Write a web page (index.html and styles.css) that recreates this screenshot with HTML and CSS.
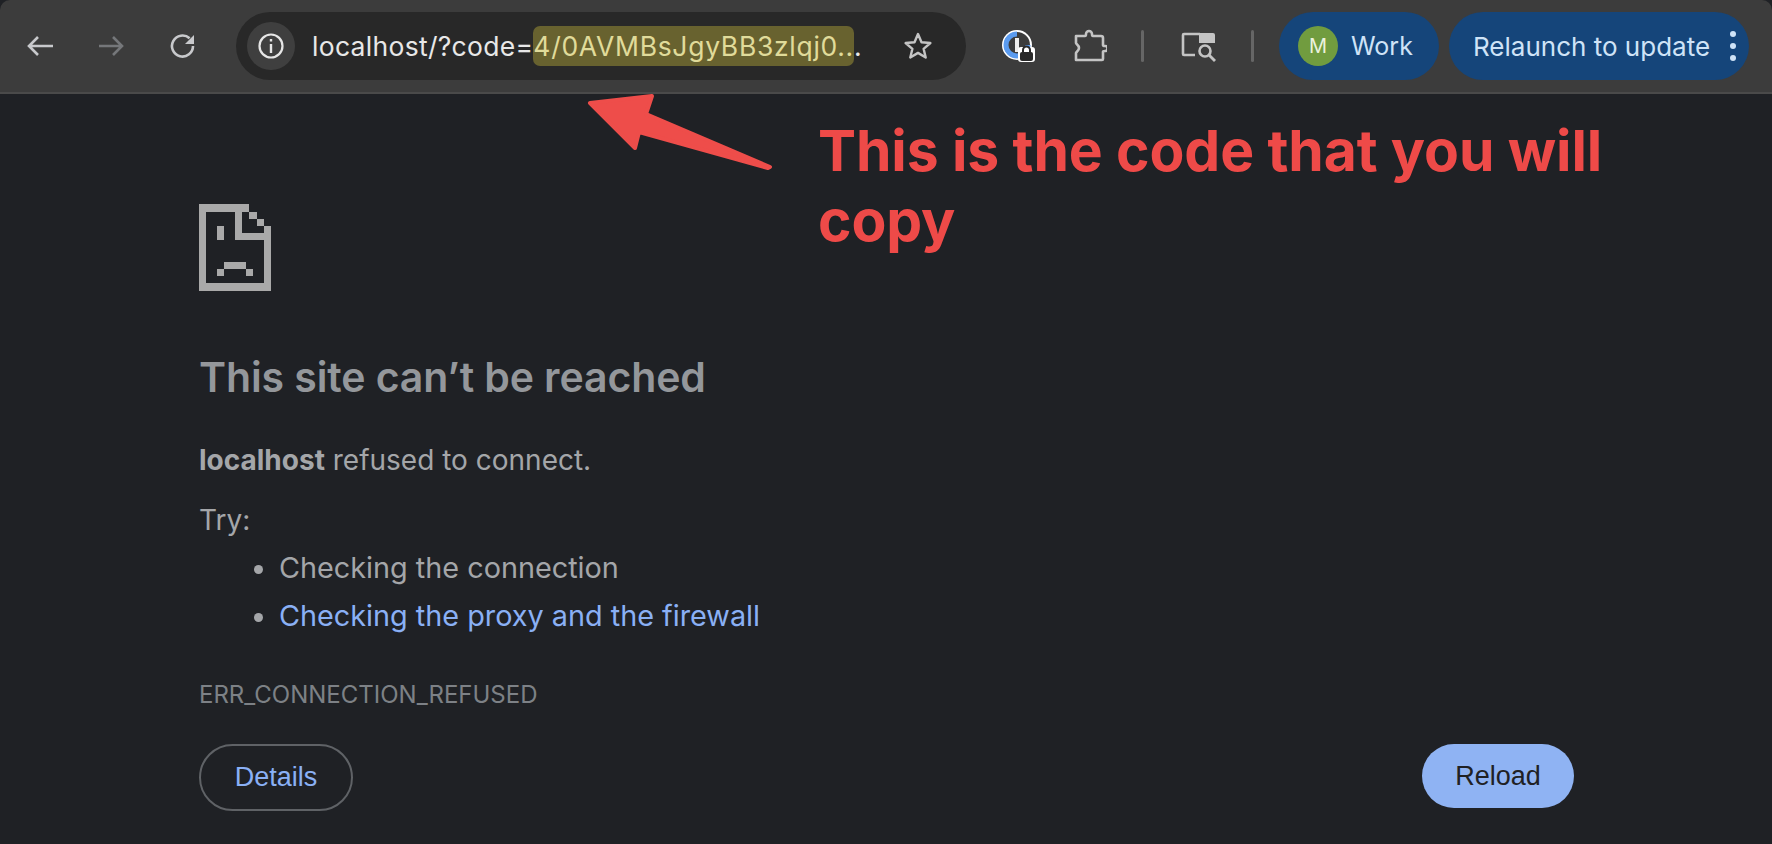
FILE: index.html
```html
<!DOCTYPE html>
<html lang="en">
<head>
  <meta charset="UTF-8" />
  <title>localhost</title>
  <link rel="stylesheet" href="styles.css">
</head>
<body>
  <div class="toolbar">
    <svg class="tool-icon" width="28" height="28" viewBox="0 0 28 28"><path d="M28 14H5M13 5l-9 9 9 9" fill="none" stroke="#c8c9cc" stroke-width="2.6"/></svg>
    <svg class="tool-icon" width="28" height="28" viewBox="0 0 28 28"><path d="M3 14h23M17 5l9 9-9 9" fill="none" stroke="#75777a" stroke-width="2.6"/></svg>
    <svg class="tool-icon" width="28" height="28" viewBox="0 0 28 28"><path d="M26 14a10.500 10.500 0 1 1-3.400-7.700" fill="none" stroke="#c8c9cc" stroke-width="2.6"/><path d="M27 3v9h-9z" fill="#c8c9cc"/></svg>
    <div class="omnibox">
      <span class="site-info"><svg width="30" height="30" viewBox="0 0 30 30"><circle cx="15" cy="15" r="11.5" fill="none" stroke="#e6e6e6" stroke-width="2.2"/><path d="M15 13v9M15 8v2.600" stroke="#e6e6e6" stroke-width="2.4"/></svg></span>
      <span class="url">localhost/?code=<span class="url-mark">4/0AVMBsJgyBB3zlqj0..</span>.</span>
      <svg class="star" width="32" height="32" viewBox="0 0 32 32"><path d="M16 4l3.500 8.200 8.900.8-6.800 5.800 2.100 8.700-7.700-4.600-7.700 4.600 2.100-8.700-6.800-5.800 8.900-.8z" fill="none" stroke="#c4c4c4" stroke-width="2.4" stroke-linejoin="round"/></svg>
    </div>
    <span class="ext-pass"><svg width="34" height="34" viewBox="0 0 34 34"><circle cx="16" cy="16" r="15" fill="#fff"/><circle cx="16" cy="16" r="13" fill="#3c3c3c"/><path d="M16 5a11 11 0 1 0 11 11" fill="none" stroke="#5a9bf0" stroke-width="5"/><rect x="14" y="9" width="4" height="14" fill="#eee"/><rect x="17" y="18" width="17" height="15" rx="3" fill="#fff"/><rect x="19" y="23" width="13" height="9" rx="2" fill="#2a2a2a"/><path d="M22 23v-2a3.500 3.500 0 0 1 7 0v2" fill="none" stroke="#2a2a2a" stroke-width="2"/></svg></span>
    <svg class="ext-puzzle" width="34" height="34" viewBox="0 0 34 34"><path d="M3 7h9c1 0 1-1 1-2a3 3 0 0 1 6 0c0 1 0 2 1 2h8a2 2 0 0 1 2 2v7c0 1 1 1 2 1a2.500 2.500 0 0 1 0 5c-1 0-2 0-2 1v7a1 1 0 0 1-1 1H3v-7c0-1 3-2 3-5s-3-4-3-5z" fill="none" stroke="#c4c4c4" stroke-width="2.6" stroke-linejoin="round"/></svg>
    <span class="divider"></span>
    <svg class="ext-lens" width="36" height="32" viewBox="0 0 36 32"><path d="M14 25H3a1 1 0 0 1-1-1V5a1 1 0 0 1 1-1h16" fill="none" stroke="#c4c4c4" stroke-width="2.6"/><path d="M18 3h14a2 2 0 0 1 2 2v8H18z" fill="#c4c4c4"/><circle cx="24" cy="21" r="5.500" fill="none" stroke="#c4c4c4" stroke-width="2.6"/><path d="M28 25l6 6" stroke="#c4c4c4" stroke-width="2.8"/></svg>
    <span class="divider second"></span>
    <div class="pill profile"><span class="avatar">M</span><span>Work</span></div>
    <div class="pill relaunch"><span>Relaunch to update</span><span class="dots"><i></i><i></i><i></i></span></div>
  </div>
  <div class="page">
    <svg class="sad-tab" width="72" height="87" viewBox="0 0 10 12" shape-rendering="crispEdges"><path fill="#a9a9a9" d="M0 0h7v1H0zM0 1h1v11H0zM1 11h9v1H1zM9 3h1v8H9zM7 1h1v1H7zM8 2h1v1H8zM5 1h1v4H5zM6 4h3v1H6zM2.500 3h1v2h-1zM3.500 8h3v1h-3zM2.500 9h1v1h-1zM6.500 9h1v1h-1z"/></svg>
    <h1 class="title">This site can’t be reached</h1>
    <p class="summary"><b>localhost</b> refused to connect.</p>
    <p class="try">Try:</p>
    <ul class="suggestions">
      <li>Checking the connection</li>
      <li><a class="link">Checking the proxy and the firewall</a></li>
    </ul>
    <p class="error-code">ERR_CONNECTION_REFUSED</p>
    <div class="buttons">
      <button class="btn-details">Details</button>
      <button class="btn-reload">Reload</button>
    </div>
  </div>
  <svg class="arrow" width="200" height="90" viewBox="0 0 200 90"><path d="M3 13L65 6 59 24 183 77 181 78 52 42 48 58z" fill="#ee4d4a" stroke="#ee4d4a" stroke-width="4" stroke-linejoin="round"/></svg>
  <div class="note">This is the code that you will copy</div>
</body>
</html>
```

FILE: styles.css
```css
* {
  box-sizing: border-box;
}

body {
  margin: 0;
  height: 844px;
  overflow: hidden;
  background-color: #1f2125;
  font-family: Inter, "Liberation Sans", sans-serif;
  position: relative;
}

.toolbar {
  height: 94px;
  background-color: #3c3c3c;
  border-bottom: 2px solid #4a4a4a;
  border-radius: 10px 10px 0 0;
  display: flex;
  align-items: center;
  padding-left: 25px;
}

.tool-icon {
  margin-right: 43px;
}

.omnibox {
  width: 730px;
  height: 68px;
  margin-left: -2px;
  padding: 0 32px 0 11px;
  border-radius: 34px;
  background-color: #282828;
  display: flex;
  align-items: center;
}

.site-info {
  width: 48px;
  height: 48px;
  border-radius: 50%;
  background-color: #3f3f3f;
  display: flex;
  align-items: center;
  justify-content: center;
  margin-right: 17px;
}

.url {
  flex: 1;
  font-size: 26.5px;
  letter-spacing: 0.3px;
  color: #e8e8e8;
  white-space: nowrap;
}

.url-mark {
  background-color: #68622f;
  color: #e0db9a;
  letter-spacing: 0.7px;
  border-radius: 7px;
  padding: 4px 0;
}

.ext-pass {
  margin-left: 35px;
  height: 34px;
}

.ext-puzzle {
  margin-left: 38px;
}

.divider {
  width: 3px;
  height: 32px;
  border-radius: 2px;
  background-color: #666;
  margin-left: 34px;
  margin-right: 37px;
}

.divider.second {
  margin-left: 34px;
  margin-right: 25px;
}

.pill {
  height: 68px;
  border-radius: 34px;
  background-color: #15457a;
  color: #cfe3f7;
  font-size: 25px;
  display: flex;
  align-items: center;
}

.profile {
  width: 160px;
  padding-left: 19px;
  gap: 13px;
}

.avatar {
  width: 40px;
  height: 40px;
  border-radius: 50%;
  background-color: #719c3f;
  color: #eaf2dc;
  font-size: 20px;
  display: flex;
  align-items: center;
  justify-content: center;
}

.relaunch {
  width: 300px;
  margin-left: 10px;
  padding-left: 24px;
  font-size: 26px;
}

.dots {
  margin-left: 20px;
  display: flex;
  flex-direction: column;
  gap: 6px;
}

.dots i {
  width: 6px;
  height: 6px;
  border-radius: 50%;
  background-color: #cfe3f7;
}

.page {
  width: 1376px;
  margin-left: 199px;
  padding-top: 110px;
  color: #a4a6a9;
}

.sad-tab {
  display: block;
}

.title {
  margin: 60px 0 0;
  font-size: 41px;
  font-weight: 600;
  letter-spacing: -0.1px;
  line-height: 52px;
  color: #94979b;
}

.summary {
  margin: 39px 0 0;
  font-size: 28px;
  line-height: 36px;
}

.try {
  margin: 24px 0 0;
  font-size: 28px;
  line-height: 36px;
}

.suggestions {
  margin: 6px 0 0;
  padding-left: 80px;
  font-size: 28.8px;
  line-height: 48px;
}

.link {
  color: #8ab0f5;
}

.error-code {
  margin: 40px 0 0;
  font-size: 24px;
  line-height: 30px;
  color: #7d8186;
}

.buttons {
  margin-top: 34px;
  display: flex;
  justify-content: space-between;
  align-items: flex-start;
}

.btn-details,
.btn-reload {
  border-radius: 34px;
  font-family: "Liberation Sans", sans-serif;
  font-size: 27px;
}

.btn-details {
  width: 154px;
  height: 67px;
  border: 2px solid #5f6266;
  background: none;
  color: #8ab0f5;
}

.btn-reload {
  width: 152px;
  height: 64px;
  margin-right: 1px;
  border: none;
  background-color: #8fb3f3;
  color: #202124;
}

.arrow {
  position: absolute;
  left: 587px;
  top: 90px;
}

.note {
  position: absolute;
  left: 818px;
  top: 116px;
  width: 820px;
  font-size: 57px;
  font-weight: 700;
  letter-spacing: -0.1px;
  line-height: 70px;
  color: #ee4a48;
}
```
